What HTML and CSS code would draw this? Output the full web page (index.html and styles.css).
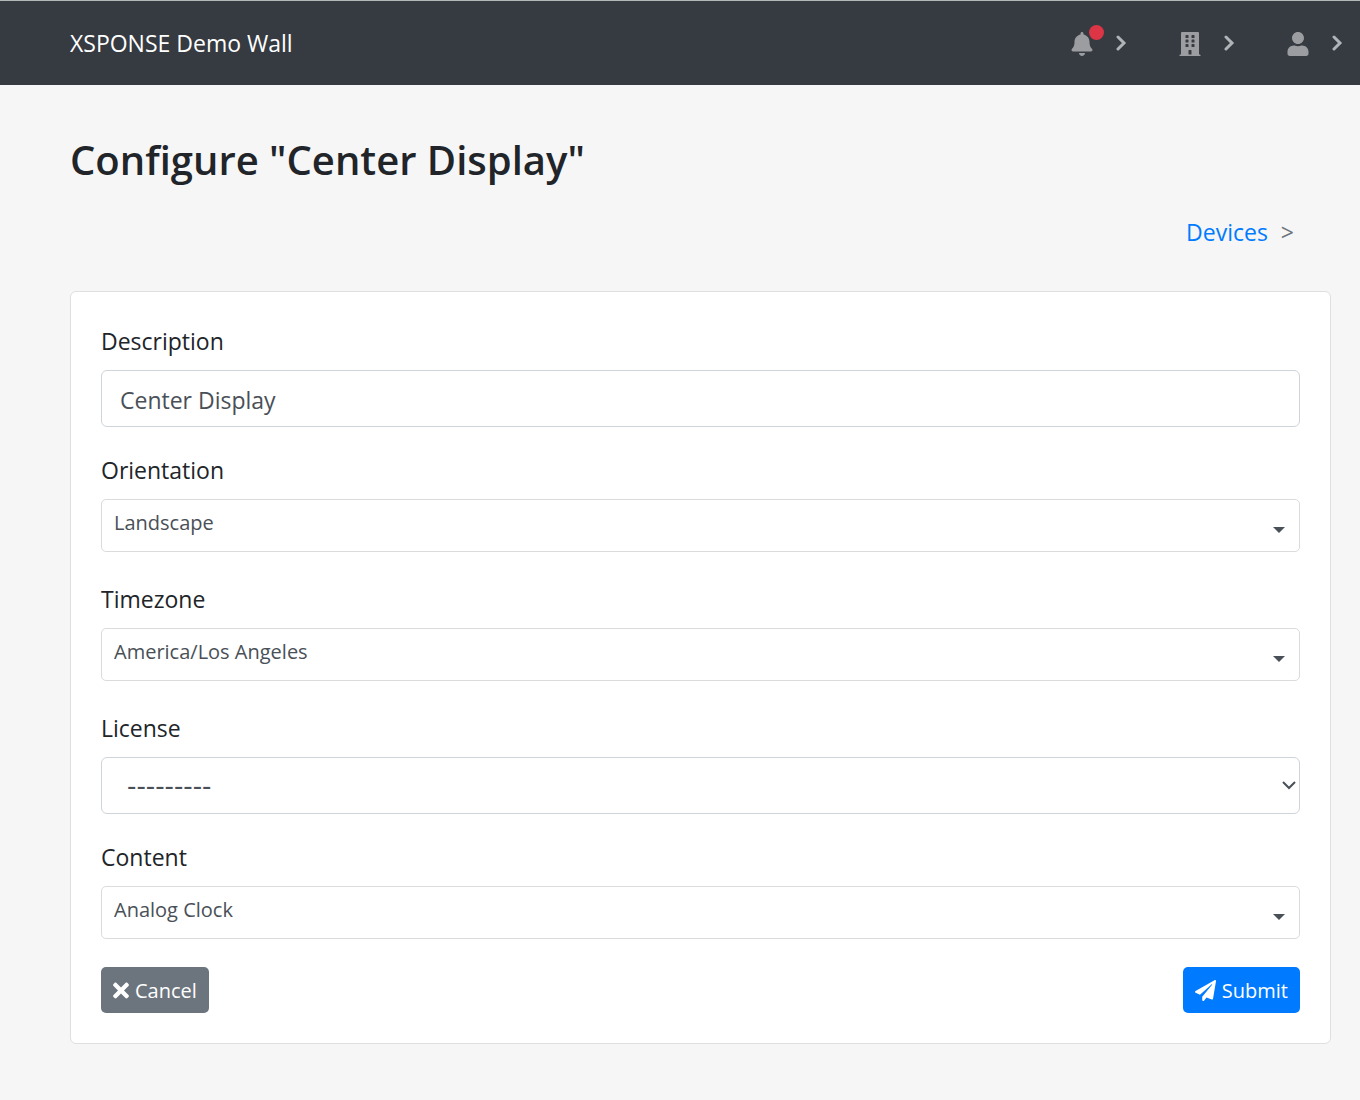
FILE: index.html
```html
<!DOCTYPE html>
<html lang="en">
<head>
<meta charset="utf-8">
<meta name="viewport" content="width=device-width, initial-scale=1">
<title>Configure "Center Display"</title>
<link rel="stylesheet" href="styles.css">
</head>
<body>
<header class="navbar">
  <a class="brand" href="#">XSPONSE Demo Wall</a>
  <nav class="menus" aria-label="Account">
    <button class="menu" type="button" aria-label="Notifications">
      <span class="menu-icon">
        <svg class="icon" viewBox="0 0 448 512"><path d="M224 512c35.32 0 63.97-28.65 63.97-64H160.03c0 35.35 28.65 64 63.97 64zm215.39-149.71c-19.32-20.76-55.47-51.99-55.47-154.29 0-77.7-54.48-139.9-127.94-155.16V32c0-17.67-14.32-32-31.98-32s-31.98 14.33-31.98 32v20.84C118.56 68.1 64.08 130.3 64.08 208c0 102.3-36.15 133.53-55.47 154.29-6 6.45-8.66 14.16-8.61 21.71.11 16.4 12.98 32 32.1 32h383.8c19.12 0 32-15.6 32.1-32 .05-7.55-2.61-15.27-8.61-21.71z"/></svg>
        <span class="badge"></span>
      </span>
      <svg class="chevron" viewBox="0 0 11 16"><path d="M2 2l6 6-6 6"/></svg>
    </button>
    <button class="menu" type="button" aria-label="Organization">
      <span class="menu-icon">
        <svg class="icon" viewBox="0 0 448 512"><path fill-rule="evenodd" d="M436 480h-20V24c0-13.255-10.745-24-24-24H56C42.745 0 32 10.745 32 24v456H12c-6.627 0-12 5.373-12 12v20h448v-20c0-6.627-5.373-12-12-12zM140 64h40q12 0 12 12v40q0 12-12 12h-40q-12 0-12-12V76q0-12 12-12zM268 64h40q12 0 12 12v40q0 12-12 12h-40q-12 0-12-12V76q0-12 12-12zM140 160h40q12 0 12 12v40q0 12-12 12h-40q-12 0-12-12v-40q0-12 12-12zM268 160h40q12 0 12 12v40q0 12-12 12h-40q-12 0-12-12v-40q0-12 12-12zM140 256h40q12 0 12 12v40q0 12-12 12h-40q-12 0-12-12v-40q0-12 12-12zM268 256h40q12 0 12 12v40q0 12-12 12h-40q-12 0-12-12v-40q0-12 12-12zM204 384h40q12 0 12 12v84h-64v-84q0-12 12-12z"/></svg>
      </span>
      <svg class="chevron" viewBox="0 0 11 16"><path d="M2 2l6 6-6 6"/></svg>
    </button>
    <button class="menu" type="button" aria-label="User">
      <span class="menu-icon">
        <svg class="icon" viewBox="0 0 448 512"><path d="M224 256c70.7 0 128-57.3 128-128S294.7 0 224 0 96 57.3 96 128s57.3 128 128 128zm89.6 32h-16.7c-22.2 10.2-46.9 16-72.9 16s-50.6-5.8-72.9-16h-16.7C60.2 288 0 348.2 0 422.4V464c0 26.5 21.5 48 48 48h352c26.5 0 48-21.5 48-48v-41.6c0-74.2-60.2-134.4-134.4-134.4z"/></svg>
      </span>
      <svg class="chevron" viewBox="0 0 11 16"><path d="M2 2l6 6-6 6"/></svg>
    </button>
  </nav>
</header>
<main class="page">
  <h1 class="title">Configure "Center Display"</h1>
  <nav class="breadcrumb" aria-label="Breadcrumb">
    <a class="crumb" href="#">Devices</a>
    <span class="separator">&gt;</span>
  </nav>
  <form class="card">
    <div class="field">
      <label class="label" for="description">Description</label>
      <input class="control" id="description" type="text" value="Center Display">
    </div>
    <div class="field">
      <label class="label" for="orientation">Orientation</label>
      <select class="picker" id="orientation"><option>Landscape</option></select>
    </div>
    <div class="field">
      <label class="label" for="timezone">Timezone</label>
      <select class="picker" id="timezone"><option>America/Los Angeles</option></select>
    </div>
    <div class="field">
      <label class="label" for="license">License</label>
      <select class="control control-select" id="license"><option>---------</option></select>
    </div>
    <div class="field">
      <label class="label" for="content">Content</label>
      <select class="picker" id="content"><option>Analog Clock</option></select>
    </div>
    <div class="actions">
      <button class="btn btn-secondary" type="button">
        <svg class="btn-icon btn-icon-narrow" viewBox="0 0 352 512"><path d="M242.72 256l100.07-100.07c12.28-12.28 12.28-32.19 0-44.48l-22.24-22.24c-12.28-12.28-32.19-12.28-44.48 0L176 189.28 75.93 89.21c-12.28-12.28-32.19-12.28-44.48 0L9.21 111.45c-12.28 12.28-12.28 32.19 0 44.48L109.28 256 9.21 356.07c-12.28 12.28-12.28 32.19 0 44.48l22.24 22.24c12.28 12.28 32.2 12.28 44.48 0L176 322.72l100.07 100.07c12.28 12.28 32.2 12.28 44.48 0l22.24-22.24c12.28-12.28 12.28-32.19 0-44.48L242.72 256z"/></svg>
        Cancel
      </button>
      <button class="btn btn-primary" type="submit">
        <svg class="btn-icon" viewBox="0 0 512 512"><path d="M476 3.2L12.5 270.6c-18.1 10.4-15.8 35.6 2.2 43.2L121 358.4l287.3-253.2c5.5-4.9 13.3 2.6 8.6 8.3L176 407v80.5c0 23.6 28.5 32.9 42.5 15.8L282 426l124.6 52.2c14.2 6 30.4-2.9 33-18.2l72-432C515 7.8 493.3-6.8 476 3.2z"/></svg>
        Submit
      </button>
    </div>
  </form>
</main>
</body>
</html>
```
FILE: styles.css
```css
* {
  box-sizing: border-box;
}

body {
  margin: 0;
  background: #f6f6f6;
  color: #212529;
  font-family: "Open Sans", "Noto Sans", sans-serif;
  font-size: 23px;
  line-height: 38px;
}

button,
input,
select {
  font-family: inherit;
}

.navbar {
  display: flex;
  align-items: center;
  justify-content: space-between;
  padding: 23px 17px 23px 70px;
  border-top: 1px solid #b3b8b6;
  background: #363a41;
}

.brand {
  color: #fff;
  text-decoration: none;
}

.menus {
  display: flex;
  gap: 52px;
}

.menu {
  display: flex;
  align-items: center;
  gap: 23px;
  padding: 0;
  border: 0;
  background: none;
}

.menu-icon {
  position: relative;
  display: flex;
  padding-top: 2px;
}

.icon {
  width: 22px;
  height: 24px;
  fill: #9b9da0;
}

.badge {
  position: absolute;
  top: -5px;
  right: -11px;
  width: 15px;
  height: 15px;
  border-radius: 50%;
  background: #dc3545;
}

.chevron {
  width: 11px;
  height: 16px;
  fill: none;
  stroke: #afb4b9;
  stroke-width: 3;
  stroke-linecap: round;
}

.page {
  padding: 50px 29px 56px 70px;
}

.title {
  margin: 0;
  font-size: 40px;
  font-weight: 600;
  line-height: 50px;
}

.breadcrumb {
  display: flex;
  align-items: center;
  justify-content: flex-end;
  gap: 13px;
  padding: 28px 37px 40px 0;
}

.crumb {
  color: #007bff;
  text-decoration: none;
}

.separator {
  color: #6c757d;
  font-size: 23px;
}

.card {
  display: flex;
  flex-direction: column;
  gap: 24px;
  padding: 30px;
  border: 1px solid #dfdfdf;
  border-radius: 6px;
  background: #fff;
}

.field {
  display: flex;
  flex-direction: column;
  gap: 10px;
  min-height: 105px;
}

.control,
.picker {
  width: 100%;
  margin: 0;
  border: 1px solid #ced4da;
  border-radius: 6px;
  background-color: #fff;
  color: #495057;
  appearance: none;
}

.control {
  height: 57px;
  padding: 2px 18px 0;
  font-size: 23px;
}

.control-select {
  padding: 0 25px;
  background-image: url("data:image/svg+xml,%3Csvg xmlns='http://www.w3.org/2000/svg' width='14' height='9'%3E%3Cpath d='M1 1l6 6 6-6' fill='none' stroke='%23495057' stroke-width='2'/%3E%3C/svg%3E");
  background-repeat: no-repeat;
  background-position: right 3px center;
  font-family: "DejaVu Sans", sans-serif;
  font-size: 26px;
}

.picker {
  height: 53px;
  padding: 0 12px 6px;
  border-color: #d9dbdd;
  border-radius: 5px;
  background-image: url("data:image/svg+xml,%3Csvg xmlns='http://www.w3.org/2000/svg' width='12' height='6'%3E%3Cpath d='M0 0h12l-6 6z' fill='%23495057'/%3E%3C/svg%3E");
  background-repeat: no-repeat;
  background-position: right 14px top 27px;
  font-size: 20px;
}

.actions {
  display: flex;
  justify-content: space-between;
}

.btn {
  display: flex;
  align-items: center;
  gap: 6px;
  height: 46px;
  padding: 0 12px;
  border: 0;
  border-radius: 5px;
  color: #fff;
  font-size: 20px;
}

.btn-secondary {
  background: #6c757d;
}

.btn-primary {
  background: #007bff;
}

.btn-icon {
  width: 21px;
  height: 21px;
  fill: #fff;
}

.btn-icon-narrow {
  width: 16px;
  height: 23px;
}
```
